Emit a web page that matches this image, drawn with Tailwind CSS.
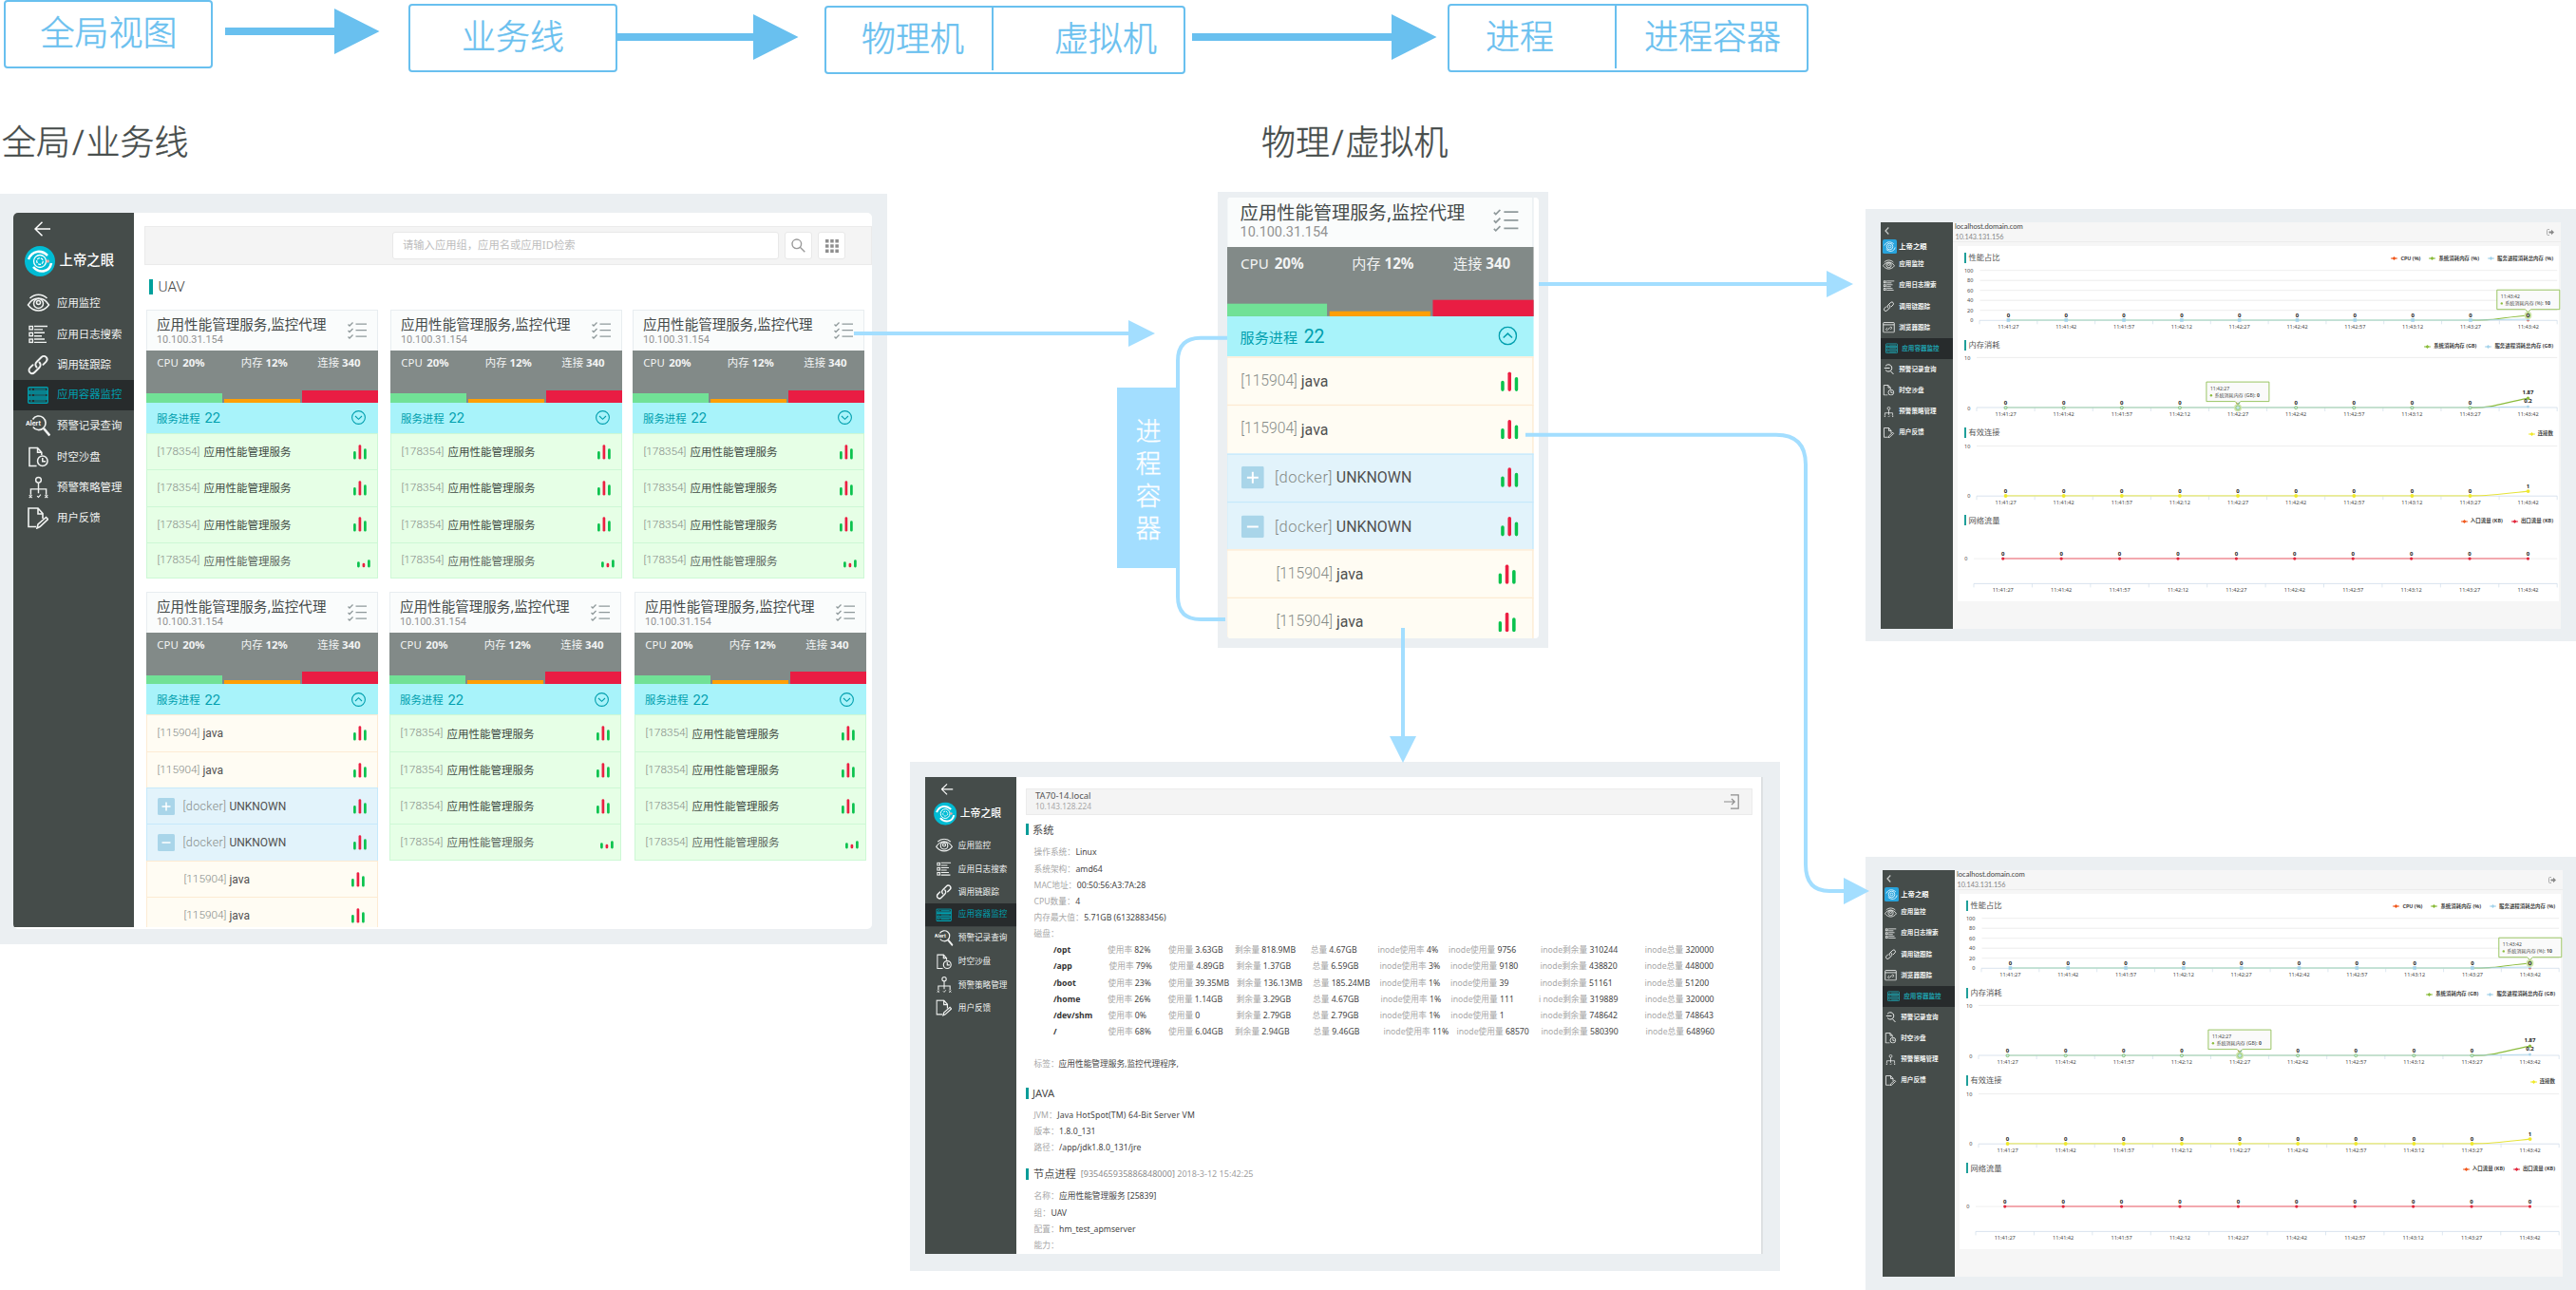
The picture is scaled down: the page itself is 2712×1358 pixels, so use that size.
<!DOCTYPE html>
<html lang="zh-CN">
<head>
<meta charset="utf-8">
<title>应用容器监控</title>
<script src="https://cdn.jsdelivr.net/npm/@tailwindcss/browser@4"></script>
</head>
<body class="bg-white">
<svg class="hidden">
  <symbol id="i-eye" viewBox="0 0 24 20"><g fill="none" stroke="currentColor" stroke-width="1.5"><path d="M1 12C4 7 8 5 12 5s8 2 11 7c-3 4-7 6-11 6S4 16 1 12Z"/><path d="M3 5C8 0 16 0 21 5"/><circle cx="12" cy="10.5" r="5"/><circle cx="12" cy="9.5" r="2"/></g></symbol>
  <symbol id="i-log" viewBox="0 0 20 20"><g fill="none" stroke="currentColor" stroke-width="1.4"><rect x="1" y="1.5" width="3.4" height="3.4"/><rect x="1" y="8.3" width="3.4" height="3.4"/><rect x="1" y="15" width="3.4" height="3.4"/><path d="M6 1.5h14M6 4.9h9M6 8.3h11M6 11.7h8M6 15h11M6 18.4h13"/></g></symbol>
  <symbol id="i-link" viewBox="0 0 22 22"><g fill="none" stroke="currentColor" stroke-width="1.9" stroke-linecap="round"><path d="M9.500 13.500c-1.600-1.700-1.500-4 .1-5.500l5-5c1.500-1.500 3.600-1.400 4.900-.1s1.400 3.400-.1 4.900l-3 3"/><path d="M12.500 8.500c1.600 1.700 1.500 4-.1 5.500l-5 5c-1.500 1.500-3.600 1.400-4.900.1s-1.400-3.400.1-4.900l3-3"/></g></symbol>
  <symbol id="i-server" viewBox="0 0 22 18"><g fill="none" stroke="currentColor" stroke-width="1.4"><rect x=".8" y=".8" width="20.400" height="16.400" rx="1"/><path d="M1 5h20M1 7h20M1 11h20M1 13h20" /><path d="M3 3h2M7 3h12M3 9h2M7 9h12M3 15h2M7 15h12" stroke-width="1.100"/></g></symbol>
  <symbol id="i-alert" viewBox="0 0 26 24"><g fill="none" stroke="currentColor"><path d="M7.500 5.500A7.300 7.300 0 1 1 7.800 13.500" stroke-width="1.600"/><path d="M19 15l6.300 7.500" stroke-width="2.600"/></g><text x="0" y="11.500" font-size="7.200" font-weight="700" fill="currentColor" font-family="Roboto,sans-serif">Alert</text></symbol>
  <symbol id="i-clock" viewBox="0 0 22 22"><g fill="none" stroke="currentColor" stroke-width="1.600"><path d="M9 21H1V1h9l4.500 5v3M10 1v5h4.500"/><circle cx="15.500" cy="15.500" r="5.500"/><path d="M15.500 12v4h3.500"/></g></symbol>
  <symbol id="i-tree" viewBox="0 0 22 24"><g fill="none" stroke="currentColor" stroke-width="1.500"><circle cx="11" cy="4" r="3"/><path d="M11 7v8M2.500 20v-6h17v6M11 13.500v5"/><path d="M.8 20.500l3 3m0-3l-3 3M18.200 20.500l3 3m0-3l-3 3M9.500 21.500l1.500 1.500 2.500-3" stroke-width="1.200"/></g></symbol>
  <symbol id="i-note" viewBox="0 0 22 23"><g fill="none" stroke="currentColor" stroke-width="1.600"><path d="M9 20.500H1V1h10l5 5.500V12M11 1v6h5"/><path d="M10 22l1-4 8.500-7.500 2 2.200L13 20.500z"/></g></symbol>
  <symbol id="i-web" viewBox="0 0 22 20"><g fill="none" stroke="currentColor" stroke-width="1.500"><rect x="1" y="1" width="20" height="18" rx="1"/><path d="M1 5h20"/><path d="M10.500 12.500l3-3c2-1.500 4 .5 2.500 2.500l-2 2M12 11.500l-3 3c-1.800 1.800-4-.3-2.500-2.300l2-2" stroke-width="1.300"/></g></symbol>
  <symbol id="i-zoomout" viewBox="0 0 22 22"><g fill="none" stroke="currentColor" stroke-width="1.900"><path d="M4.500 4.500a7 7 0 1 1 0 8"/><path d="M2 8.500h11M14.500 14.500l6 6.500"/></g></symbol>
  <symbol id="i-logo" viewBox="0 0 32 32"><circle cx="16" cy="16" r="16" fill="#00bcd4"/><g fill="none" stroke="#fff"><path d="M4 14C8 4 18 4 24 10" stroke-width="2.600"/><path d="M28 18C26 28 15 29 9 22" stroke-width="2.600"/><circle cx="16" cy="16" r="6.500" stroke-width="1.300"/><circle cx="16" cy="16" r="3.300" stroke-width="1.300" stroke-dasharray="3 1"/></g><circle cx="24.300" cy="16" r="1.700" fill="#e8a9a4"/></symbol>
  <symbol id="i-check" viewBox="0 0 20 18"><g fill="none" stroke="#8f999b" stroke-width="1.300"><path d="M8.500 2.200H20M8.500 8.700H20M8.500 15.200H20"/><path d="M.5 2.500l1.500 1.500 3.500-3.500M.5 9l1.500 1.500L5.500 7M.5 15.500L2 17l3.500-3.500"/></g></symbol>
  <symbol id="i-bars" viewBox="0 0 14 16"><g stroke-width="2.700" stroke-linecap="round"><path d="M1.400 8.400v5.800M12.400 5.700v8.500" stroke="#0ac24d"/><path d="M6.900 1.500v12.700" stroke="#ec1f42"/></g></symbol>
  <symbol id="i-bars-s" viewBox="0 0 14 9"><g stroke-width="2.700" stroke-linecap="round"><path d="M1.400 3.600v3.500M12.400 1.500v5.600" stroke="#0ac24d"/><path d="M6.900 5v2" stroke="#ec1f42"/></g></symbol>
</svg>

<main class="relative h-[1358px] w-[2712px] overflow-hidden [font-family:'Noto_Sans','Noto_Sans_CJK_SC',sans-serif]">

  <!-- flow nodes -->
  <div class="absolute left-[4px] top-0 h-[72px] w-[220px] rounded-[4px] border-2 border-[#69c0ef] pl-[36.500px] text-[36px] font-light leading-[65px] text-[#69c0ef] [-webkit-text-stroke:0.4px]">全局视图</div>
  <div class="absolute left-[430px] top-[4px] h-[72px] w-[220px] rounded-[4px] border-2 border-[#69c0ef] pl-[54px] text-[36px] font-light leading-[66px] text-[#69c0ef] [-webkit-text-stroke:0.4px]">业务线</div>
  <div class="absolute left-[868px] top-[6px] flex h-[72px] w-[380px] rounded-[4px] border-2 border-[#69c0ef] text-[36px] font-light leading-[66px] text-[#69c0ef] [-webkit-text-stroke:0.4px]">
    <div class="h-[66px] w-[176px] border-r-2 border-[#69c0ef] pl-[37px]">物理机</div><div class="pl-[64px]">虚拟机</div>
  </div>
  <div class="absolute left-[1524px] top-[4px] flex h-[72px] w-[380px] rounded-[4px] border-2 border-[#69c0ef] text-[36px] font-light leading-[66px] text-[#69c0ef] [-webkit-text-stroke:0.4px]">
    <div class="h-[66px] w-[176px] border-r-2 border-[#69c0ef] pl-[38px]">进程</div><div class="pl-[29px]">进程容器</div>
  </div>
  <h2 class="absolute left-[2px] top-[124px] text-[36px] font-light leading-[52px] text-[#454b4a] [-webkit-text-stroke:0.4px]">全局<span class="mx-[2px]">/</span>业务线</h2>
  <h2 class="absolute left-[1328px] top-[124px] text-[36px] font-light leading-[52px] text-[#454b4a] [-webkit-text-stroke:0.4px]">物理<span class="mx-[2px]">/</span>虚拟机</h2>

  <!-- overview window -->
  <section class="absolute left-0 top-[204px] h-[790px] w-[934px] bg-[#ebeff2] pl-[14px] pt-[20px]">
    <div class="flex h-[754px] w-[904px] overflow-hidden rounded-[5px] bg-white">
      <div data-sidebar class="h-[752px] w-[127px] shrink-0"></div>
      <div class="flex h-[752px] flex-1 flex-col overflow-hidden">
        <div class="ml-[11px] mt-[14px] flex h-[41px] shrink-0 items-center border border-[#ebebeb] bg-[#f4f4f4] pl-[260px]">
          <div class="flex h-[29px] w-[407px] items-center rounded-[3px] border border-[#e8e8e8] bg-white pl-[10px] text-[11.3px] text-[#bdbdbd]">请输入应用组，应用名或应用ID检索</div>
          <div class="ml-[6px] flex size-[29px] items-center justify-center rounded-[3px] border border-[#e8e8e8] bg-white"><svg class="size-[15px]" viewBox="0 0 15 15" fill="none" stroke="#9a9a9a" stroke-width="1.400"><circle cx="5.800" cy="5.800" r="4.800"/><path d="M9.300 9.300l5 5"/></svg></div>
          <div class="ml-[6px] flex size-[29px] items-center justify-center rounded-[3px] border border-[#e8e8e8] bg-white"><svg class="size-[14px]" viewBox="0 0 14 14" fill="#8e8e8e"><path d="M0 0h3.500v3.500H0zM5.200 0h3.500v3.500H5.200zM10.400 0h3.500v3.500h-3.500zM0 5.200h3.500v3.500H0zM5.200 5.200h3.500v3.500H5.200zM10.400 5.200h3.500v3.500h-3.500zM0 10.400h3.500v3.500H0zM5.200 10.400h3.500v3.500H5.200zM10.400 10.400h3.500v3.500h-3.500z"/></svg></div>
        </div>
        <div class="ml-[16px] mt-[14px] flex h-[18px] shrink-0 items-center"><i class="h-[16px] w-[3.500px] bg-[#00a09c]"></i><span class="ml-[6px] text-[15.300px] font-light text-[#444] [font-family:Roboto,sans-serif]">UAV</span></div>
        <div class="ml-[13px] mt-[15px] flex h-[284px] shrink-0 items-start">
          <div data-card="down"></div><div data-card="down" class="ml-[13px]"></div><div data-card="down" class="ml-[11px]"></div>
        </div>
        <div class="ml-[13px] mt-[12.500px] flex shrink-0 items-start">
          <div data-card="up"></div><div data-card="down" class="ml-[12px]"></div><div data-card="down" class="ml-[14px]"></div>
        </div>
      </div>
    </div>
  </section>

  <!-- machine card -->
  <section class="absolute left-[1282px] top-[202px] h-[480px] w-[348px] bg-[#ebeff2] pl-[10px] pt-[6px]">
    <div class="h-[464px] w-[328px] overflow-hidden rounded-[4px] bg-white">
      <div data-card="up" class="-ml-[1.500px] -mt-[5px] w-[244px] origin-top-left scale-[1.326]"></div>
    </div>
  </section>
  <div class="absolute left-[1176px] top-[408px] flex h-[190px] w-[66px] flex-col items-center bg-[#a3deff] pt-[29px] text-[27px] font-light leading-[34px] text-white [-webkit-text-stroke:0.3px]"><span>进</span><span>程</span><span>容</span><span>器</span></div>

  <!-- machine detail window -->
  <section class="absolute left-[958px] top-[802px] h-[536px] w-[916px] bg-[#ebeff2] pl-[16px] pt-[16px]">
    <div class="flex h-[502px] w-[881.500px] overflow-hidden border-r-2 border-[#dde0e2] bg-white">
      <div class="h-[502px] w-[96px] shrink-0"><div data-sidebar class="h-[665px] w-[127px] origin-top-left scale-[0.756]"></div></div>
      <div class="flex flex-1 flex-col pl-[10px] text-[8.700px] leading-[17.150px]">
        <div class="mt-[12px] flex h-[32px] w-[765px] items-center justify-between border border-[#ebebeb] bg-[#f4f4f4] pl-[9px] pr-[13px]">
          <div class="leading-[10.500px]"><div class="text-[9.500px] text-[#555]">TA70-14.local</div><div class="text-[8.300px] text-[#a8a8a8]">10.143.128.224</div></div>
          <svg class="size-[16px]" viewBox="0 0 16 16" fill="none" stroke="#8c8c8c" stroke-width="1.200"><path d="M7 .8h8.200v14.400H7M0 8h11M8 4.800L11.200 8 8 11.200"/></svg>
        </div>
        <div class="mt-[7px] flex h-[17px] items-center"><i class="h-[12px] w-[3px] bg-[#0a9c98]"></i><span class="ml-[4px] text-[11.200px] text-[#4a4a4a]">系统</span></div>
        <div id="sys" class="mt-[7.500px] pl-[8.500px]"></div>
        <div id="disks"></div>
        <div class="mt-[17px] pl-[8.500px]"><span class="text-[#a8a8a8]">标签：</span><span class="text-[#444]">应用性能管理服务,监控代理程序,</span></div>
        <div class="mt-[13px] flex h-[17px] items-center"><i class="h-[12px] w-[3px] bg-[#0a9c98]"></i><span class="ml-[4px] text-[11.200px] text-[#4a4a4a]">JAVA</span></div>
        <div id="java" class="mt-[6.500px] pl-[8.500px]"></div>
        <div class="mt-[10px] flex h-[17px] items-center"><i class="h-[12px] w-[3px] bg-[#0a9c98]"></i><span class="ml-[5px] text-[11.200px] text-[#4a4a4a]">节点进程</span><span class="ml-[5px] text-[9.050px] text-[#8c8c8c]">[935465935886848000] <span class="text-[#a0a0a0]">2018-3-12 15:42:25</span></span></div>
        <div id="node" class="mt-[7px] pl-[8.500px]"></div>
      </div>
    </div>
  </section>

  <!-- monitoring windows -->
  <section data-monitor class="absolute left-[1964px] top-[220px] h-[455px] w-[748px] bg-[#ebeff2] pl-[16px] pt-[14px]"></section>
  <section data-monitor class="absolute left-[1964px] top-[902px] h-[456px] w-[748px] bg-[#ebeff2] pl-[18px] pt-[14px]"></section>

  <!-- connectors -->
  <svg class="absolute left-0 top-0 h-[1358px] w-[2712px]" viewBox="0 0 2712 1358">
    <g fill="#69c0ef"><path d="M237 29h115V9l47.500 24L352 57V37H237z"/><path d="M650 35h143V15l47.500 24L793 63V43H650z"/><path d="M1255 35h210V15l47.500 24L1465 63V43h-210z"/></g>
    <g fill="none" stroke="#a3deff" stroke-width="4"><path d="M899 351h290M1292 355.700h-28Q1240 355.700 1240 380v248Q1240 652 1264 652h26M1620 299h304M1606 457.700h264Q1901 457.700 1901 489v421Q1901 938 1926 938h16M1477 661v115"/></g>
    <g fill="#a3deff"><path d="M1188 337l28 14-28 14zM1923 285l28 14-28 14zM1941 924l27 14-27 14zM1463 775h28l-14 28z"/></g>
  </svg>
</main>

<script>
const use = (id, cls, extra = '') => `<svg class="${cls}" ${extra}><use href="#i-${id}"/></svg>`;

/* sidebar */
const NAV = [
  ['eye', '应用监控', 32.5, 25, 20], ['log', '应用日志搜索', 32.5, 20, 20], ['link', '调用链跟踪', 31.5, 22, 22], ['server', '应用容器监控', 32, 22, 18],
  ['alert', '预警记录查询', 33.5, 26, 24], ['clock', '时空沙盘', 32, 21, 22], ['tree', '预警策略管理', 32, 21, 24], ['note', '用户反馈', 33, 22, 23]];
document.querySelectorAll('[data-sidebar]').forEach(el => {
  el.innerHTML = `<div class="flex h-full w-[127px] flex-col bg-[#454c4a] text-[#f1f3f2]">
    <svg class="ml-[22px] mt-[9px] h-[16px] w-[17px] shrink-0" viewBox="0 0 17 16" fill="none" stroke="#fff" stroke-width="1.500"><path d="M17 8H1M8.500.8L1 8l7.500 7.200"/></svg>
    <div class="mt-[10px] flex h-[32px] shrink-0 items-center pl-[11.500px]">${use('logo', 'size-[32px]')}<b class="ml-[5px] -mt-[2px] text-[14.400px] font-medium leading-none text-white">上帝之眼</b></div>
    <div class="mt-[12px]">${NAV.map(([ic, t, h, w, ih], i) => `<div class="${i === 3 ? 'flex items-center bg-[#272b2c] text-[#00a0b0]' : 'flex items-center'}" style="height:${h}px"><span class="ml-[12px] flex w-[28px] justify-center">${use(ic, 'shrink-0', `width="${w}" height="${ih}"`)}</span><span class="-mt-[1px] ml-[6px] text-[11.400px] leading-none">${t}</span></div>`).join('')}</div></div>`;
});

/* machine card */
const row = (bg, body, icon = use('bars', 'mr-[11.500px] h-[16px] w-[14px]')) =>
  `<div class="flex h-[38.300px] items-center border-x border-t pl-[10.500px] pt-[.5px] text-[11.500px] ${bg}">${body}<span class="ml-auto">${icon}</span></div>`;
const GREEN = 'border-[#cdf8d5] bg-[#e6ffe6]', CREAM = 'border-[#fdebd3] bg-[#fffcf3]', BLUE = 'border-[#c6e9fb] bg-[#e2f3fb]';
const pid = t => `<span class="text-[11.800px] font-light text-[#858b87] [font-family:Roboto,sans-serif]">${t}</span>`;
const docker = `<span class="text-[12.500px] font-light tracking-[.35px] text-[#858b87] [font-family:Roboto,sans-serif]">[docker]</span>`;
const lat = t => `<span class="ml-[3px] text-[12px] text-[#515151] [font-family:Roboto,sans-serif]">${t}</span>`;
const svc = c => pid('[178354]') + `<span class="ml-[4px] ${c}">应用性能管理服务</span>`;
const btn = d => `<svg class="mr-[9px] size-[18px]" viewBox="0 0 18 18"><rect width="18" height="18" rx="1.500" fill="#a9d5e9"/><path d="${d}" stroke="#fff" stroke-width="1.500"/></svg>`;
const downRows = [0, 1, 2].map(() => row(GREEN, svc('text-[#3f4a43]'))).join('') +
  row(GREEN + ' border-b', svc('text-[#5c665f]'), use('bars-s', 'mr-[7px] mt-[6px] h-[9px] w-[14px]'));
const indented = row(CREAM, `<span class="w-[28px]"></span>` + pid('[115904]') + lat('java'), use('bars', 'mr-[13px] h-[16px] w-[14px]'));
const upRows = row(CREAM, pid('[115904]') + lat('java')).repeat(2) +
  row(BLUE, btn('M4.500 9h9M9 4.500v9') + docker + lat('UNKNOWN')) + row(BLUE, btn('M4.500 9h9') + docker + lat('UNKNOWN')) + indented.repeat(2);
document.querySelectorAll('[data-card]').forEach(el => {
  const up = el.dataset.card === 'up';
  el.innerHTML = `<div class="w-[244px] leading-none">
    <div class="flex h-[43px] justify-between border border-b-0 border-[#e8edf0] bg-[#fafcfc] pl-[10px] pr-[11px]">
      <div class="pt-[6px]"><div class="text-[14.550px] leading-[16px] text-[#444a49]">应用性能管理服务,监控代理</div><div class="mt-[2px] text-[10.900px] leading-[13px] text-[#929292] [font-family:Roboto,sans-serif]">10.100.31.154</div></div>
      ${use('check', 'mt-[12px] h-[18px] w-[20px]')}
    </div>
    <div class="flex h-[54.700px] flex-col justify-between bg-[#828a88] text-[11.400px] text-[#f3f4f4]">
      <div class="flex pl-[11.300px] pt-[7px]"><span class="w-[88.500px]">CPU<b class="ml-[4.500px]">20%</b></span><span class="w-[80.500px]">内存<b class="ml-[3px]">12%</b></span><span>连接<b class="ml-[3px]">340</b></span></div>
      <div class="flex items-end gap-[2px]"><i class="h-[9.700px] w-[80px] bg-[#71e196]"></i><i class="h-[4px] w-[80px] bg-[#ff9f05]"></i><i class="h-[13.200px] w-[80px] bg-[#e91d43]"></i></div>
    </div>
    <div class="flex h-[32.300px] items-center bg-[#a8f3fa] pl-[11px] pr-[13px] text-[11.400px] text-[#009fae]"><span class="pt-[1.500px]">服务进程</span><span class="ml-[5px] pt-[1.500px] text-[14.700px] [font-family:Roboto,sans-serif]">22</span>
      <svg class="ml-auto size-[15px]" viewBox="0 0 15 15" fill="none" stroke="#009fae" stroke-width="1.100"><circle cx="7.500" cy="7.500" r="6.900"/><path d="${up ? 'M4 9l3.500-3.300L11 9' : 'M4 6l3.500 3.300L11 6'}"/></svg></div>
    ${up ? upRows : downRows}</div>`;
});

/* detail lists */
const kv = a => a.map(([k, v]) => `<div><span class="text-[#a8a8a8]">${k}：</span><span class="${k === 'JVM' ? 'ml-[.5px] tracking-[.15px] text-[#444]' : 'ml-[.5px] text-[#444]'}">${v}</span></div>`).join('');
sys.innerHTML = kv([['操作系统', 'Linux'], ['系统架构', 'amd64'], ['MAC地址', '00:50:56:A3:7A:28'], ['CPU数量', '4'], ['内存最大值', '5.71GB (6132883456)'], ['磁盘', '']]);
java.innerHTML = kv([['JVM', 'Java HotSpot(TM) 64-Bit Server VM'], ['版本', '1.8.0_131'], ['路径', '/app/jdk1.8.0_131/jre']]);
node.innerHTML = kv([['名称', '应用性能管理服务 [25839]'], ['组', 'UAV'], ['配置', 'hm_test_apmserver'], ['能力', '']]);
const KEYS = ['', '使用率', '使用量', '剩余量', '总量', 'inode使用率', 'inode使用量', 'inode剩余量', 'inode总量'];
const DISKS = [
  [['/opt', '82%', '3.63GB', '818.9MB', '4.67GB', '4%', '9756', '310244', '320000'], [0, 57, 121, 191, 270.7, 341.5, 416, 513, 622.7]],
  [['/app', '79%', '4.89GB', '1.37GB', '6.59GB', '3%', '9180', '438820', '448000'], [0, 58.5, 122, 192.5, 272.5, 343.5, 418, 512.5, 622.5]],
  [['/boot', '23%', '39.35MB', '136.13MB', '185.24MB', '1%', '39', '51161', '51200'], [0, 57.5, 121, 193, 273, 343.5, 418, 512.5, 622.5]],
  [['/home', '26%', '1.14GB', '3.29GB', '4.67GB', '1%', '111', '319889', '320000'], [0, 57, 120.5, 192.5, 273, 344.5, 418.5, 511, 623]],
  [['/dev/shm', '0%', '0', '2.79GB', '2.79GB', '1%', '1', '748642', '748643'], [0, 57.5, 121, 192.5, 272.5, 343.7, 418.3, 512.8, 622.5]],
  [['/', '68%', '6.04GB', '2.94GB', '9.46GB', '11%', '68570', '580390', '648960'], [0, 57.5, 121, 191, 273.5, 347.5, 424.5, 513.5, 623.5]]];
disks.innerHTML = DISKS.map(([v, x], r) => `<div class="flex whitespace-nowrap pl-[29px]">${v.map((t, i) =>
  `<div class="shrink-0" style="width:${(x[i + 1] || x[i] + 90) - x[i]}px">${i ? `<span class="text-[#a8a8a8]">${r === 3 && i === 7 ? 'i node剩余量' : KEYS[i]}</span> <span class="text-[#444]">${t}</span>` : `<b class="text-[#333]">${t}</b>`}</div>`).join('')}</div>`).join('');

/* monitor window */
const NAV2 = [['eye', '应用监控'], ['log', '应用日志搜索'], ['link', '调用链跟踪'], ['web', '浏览器跟踪'], ['server', '应用容器监控'], ['zoomout', '预警记录查询'], ['clock', '时空沙盘'], ['tree', '预警策略管理'], ['note', '用户反馈']];
const TIMES = ['11:41:27', '11:41:42', '11:41:57', '11:42:12', '11:42:27', '11:42:42', '11:42:57', '11:43:12', '11:43:27', '11:43:42'];
const GRAY = '#e9e9e9', AXIS = '#cfdcea', END = 2691.7;
const tx = (x, y, s, a = 'middle', w = 400, f = '#4a4a4a') => `<text x="${x}" y="${y + 1.9}" text-anchor="${a}" font-weight="${w}" fill="${f}">${s}</text>`;
const val = (x, y, s) => `<text x="${x}" y="${y + 2.1}" text-anchor="middle" font-size="6" font-weight="700" fill="#222">${s}</text>`;
const ln = (x1, y1, x2, y2, c, w = .8) => `<path d="M${x1} ${y1}L${x2} ${y2}" stroke="${c}" stroke-width="${w}" fill="none"/>`;
function base(x0, axisY, zeroY, timeY, skip) {
  const st = (END - x0) / 10; let s = ln(x0, axisY, END, axisY, AXIS);
  for (let i = 0; i <= 10; i++) s += ln(x0 + st * i, axisY, x0 + st * i, axisY + 4, AXIS, .7);
  TIMES.forEach((t, i) => { const x = x0 + st * (i + .5); s += tx(x, timeY, t); if (!skip.includes(i)) s += val(x, zeroY, '0'); });
  return s;
}
const pts = (x0, n) => [...Array(n)].map((_, i) => x0 + (END - x0) / 10 * (i + .5));
const tip = (x, y, px, py, t, l, v) => `<path d="M${x} ${y}h66v20.500H${px + 3}L${px} ${py}l-3 ${-(py - y - 20.5)}H${x}z" fill="#fafafa" fill-opacity=".93" stroke="#8fbf52" stroke-width=".9"/><g font-size="5.100">${tx(x + 4, y + 7, t, 'start')}<circle cx="${x + 5}" cy="${y + 14.2}" r="1.200" fill="#8bbc3c"/>${tx(x + 8.5, y + 14.2, `${l}: <tspan font-weight="700">${v}</tspan>`, 'start')}</g>`;
const C1 = [100, 80, 60, 40, 20, 0].map((v, i) => tx(2077, 285 + 10.5 * i, v, 'end') + (v ? ln(2084, 284.7 + 10.5 * i, END, 284.7 + 10.5 * i, GRAY) : '')).join('')
  + base(2083.5, 337.3, 332, 344, [9]) + ln(2114, 337, 2600, 337, '#b7dccb', 1.4)
  + '<path d="M2600 337Q2620 337 2630 335.500T2661 332" stroke="#8bbc3c" stroke-width="1.200" fill="none"/>' + ln(2600, 337, 2661, 336, '#a5d3ea', .8) + '<circle cx="2661" cy="337.300" r="1.200" fill="#e8503a"/><circle cx="2661" cy="336" r="1.600" fill="#a5d3ea"/>'
  + pts(2083.5, 9).map(x => `<rect x="${x - 1.8}" y="335.200" width="3.600" height="3.600" fill="#a5d3ea"/>`).join('')
  + '<circle cx="2661" cy="332" r="4" fill="#d5e6b5"/><circle cx="2661" cy="332" r="2.200" fill="#fff" stroke="#8bbc3c" stroke-width=".8"/>' + val(2661, 332, '0')
  + tip(2628.3, 305.2, 2661, 328.5, '11:43:42', '系统消耗内存 (%)', '10');
const C2 = tx(2074, 377, '10', 'end') + tx(2074, 430, '0', 'end') + ln(2080.5, 376.7, END, 376.7, GRAY)
  + base(2080.5, 429.3, 424.3, 436.3, [9]) + ln(2111.5, 429.3, 2600, 429.3, '#9ed0a8', 1)
  + '<path d="M2600 429.300C2625 430 2635 424 2661 419.600" stroke="#8bbc3c" stroke-width="1.300" fill="none"/>' + ln(2600, 429.3, 2661, 428.4, '#a5d3ea', .8)
  + '<circle cx="2355.500" cy="429.500" r="4" fill="#cfe6ae"/>'
  + pts(2080.5, 9).map((x, i) => `<circle cx="${x}" cy="429.500" r="${i === 4 ? 2.2 : 1.6}" fill="#bfe3e6" stroke="#7fbf5a" stroke-width=".7"/>`).join('')
  + '<circle cx="2661" cy="419.600" r="1.700" fill="#8bbc3c"/><circle cx="2661" cy="428.400" r="1.400" fill="#a5d3ea"/>' + val(2661, 413.7, '1.87') + val(2661, 422.7, '0.2')
  + tip(2322.4, 402.4, 2355.5, 425.5, '11:42:27', '系统消耗内存 (GB)', '0');
const C3 = tx(2074, 469.5, '10', 'end') + tx(2074, 522, '0', 'end') + ln(2080.5, 469.2, END, 469.2, GRAY)
  + base(2080.5, 521.8, 516.6, 528.7, [9]) + ln(2111.5, 521.5, 2600, 521.5, '#e9ea6e', 1.3) + '<path d="M2600 521.500C2620 521.800 2640 519 2661 516.700" stroke="#e6e33a" stroke-width="1.200" fill="none"/>'
  + pts(2080.5, 10).map((x, i) => `<circle cx="${x}" cy="${i < 9 ? 521.6 : 516.7}" r="1.900" fill="#f0e92c"/>`).join('') + val(2661, 511.6, '1');
const C4 = tx(2071, 588.2, '0', 'end') + ln(2077.5, 588, END, 588, '#ededed') + base(2077.5, 614.3, 582.6, 621, []) + ln(2108.3, 587.9, 2661, 587.9, '#ee5a66', 1.1)
  + pts(2077.5, 10).map(x => `<circle cx="${x}" cy="588" r="1.600" fill="#e2273d"/>`).join('');
const LG = [[['CPU (%)', '#f0591e'], ['系统消耗内存 (%)', '#8bbc3c'], ['服务进程消耗总内存 (%)', '#a5d3ea']], [['系统消耗内存 (GB)', '#8bbc3c'], ['服务进程消耗总内存 (GB)', '#a5d3ea']], [['连接数', '#f0e92c']], [['入口流量 (KB)', '#f0591e'], ['出口流量 (KB)', '#e2273d']]];
const SEC = [['性能占比', C1], ['内存消耗', C2], ['有效连接', C3], ['网络流量', C4]];
document.querySelectorAll('[data-monitor]').forEach(el => {
  el.innerHTML = `<div class="flex h-[428px] w-[716px] bg-[#f6f6f6] leading-none">
    <div class="w-[76px] shrink-0 bg-[#454c4a] text-[#f1f3f2]">
      <svg class="ml-[4px] mt-[5px] h-[8px] w-[5px]" viewBox="0 0 5 8" fill="none" stroke="#c9cccb" stroke-width="1.200"><path d="M4.300.5L1 4l3.300 3.500"/></svg>
      <div class="mt-[5px] flex h-[15px] items-center pl-[2px]"><svg class="size-[15px]" viewBox="0 0 32 32"><rect width="32" height="32" rx="4" fill="#27a3dc"/><g fill="none" stroke="#d8f1ff" stroke-width="2"><path d="M4 14C8 4 18 4 25 10M28 18C26 28 15 29 8 22"/><circle cx="16" cy="16" r="7"/><circle cx="16" cy="16" r="3"/></g></svg><b class="ml-[2.300px] text-[7.300px] text-white">上帝之眼</b></div>
      <div class="mt-[.6px]">${NAV2.map(([ic, t], i) => `<div class="${i === 4 ? 'flex h-[22.100px] items-center bg-[#272b2c] pl-[5px] text-[#1fa0ac]' : 'flex h-[22.100px] items-center pl-[2px]'}">${use(ic, 'h-[11.500px] w-[13px]')}<span class="ml-[4.300px] text-[6.550px] font-bold">${t}</span></div>`).join('')}</div>
    </div>
    <div class="flex-1">
      <div class="flex h-[21px] items-center justify-between border-b border-[#ececec] pl-[2px] pr-[7px] text-[7.550px] [font-family:Lato,sans-serif]"><div><div class="text-[#444]">localhost.domain.com</div><div class="mt-[3.500px] pl-[.5px] text-[7.200px] text-[#858585]">10.143.131.156</div></div>
        <svg class="h-[7px] w-[8px]" viewBox="0 0 8 7"><path d="M3 .5H1.500Q.5.500.5 1.500v4q0 1 1 1H3" fill="none" stroke="#999" stroke-width=".8"/><path d="M2.500 2.500H5V.8L8 3.500 5 6.200V4.500H2.500z" fill="#888"/></svg></div>
      <div class="ml-[4.500px] mt-[4px] h-[374px] w-[633px] bg-white pt-[1px]">
        ${SEC.map(([t, c], i) => `<div class="h-[92.300px]"><div class="flex h-[22px] items-center pl-[7px] pr-[5.500px]"><i class="h-[11px] w-[2.500px] bg-[#1f9f9a]"></i><span class="ml-[2.500px] text-[8.250px] text-[#555]">${t}</span>
          <div class="ml-auto flex gap-[9px] pt-[2.500px]">${LG[i].map(([n, k]) => `<span class="flex items-center text-[5.450px] font-bold text-[#444]"><svg class="mr-[3px] h-[4px] w-[7px]" viewBox="0 0 7 4"><path d="M0 2h7" stroke="${k}" stroke-width="1"/><path d="M3.500 0l2 2-2 2-2-2z" fill="${k}"/></svg>${n}</span>`).join('')}</div></div>
          <svg class="block h-[70.300px] w-[633px] overflow-visible" viewBox="2060.5 ${(282 + 92.3 * i).toFixed(1)} 633 70.3" font-size="5.6">${c}</svg></div>`).join('')}
      </div>
    </div></div>`;
});
</script>
</body>
</html>
